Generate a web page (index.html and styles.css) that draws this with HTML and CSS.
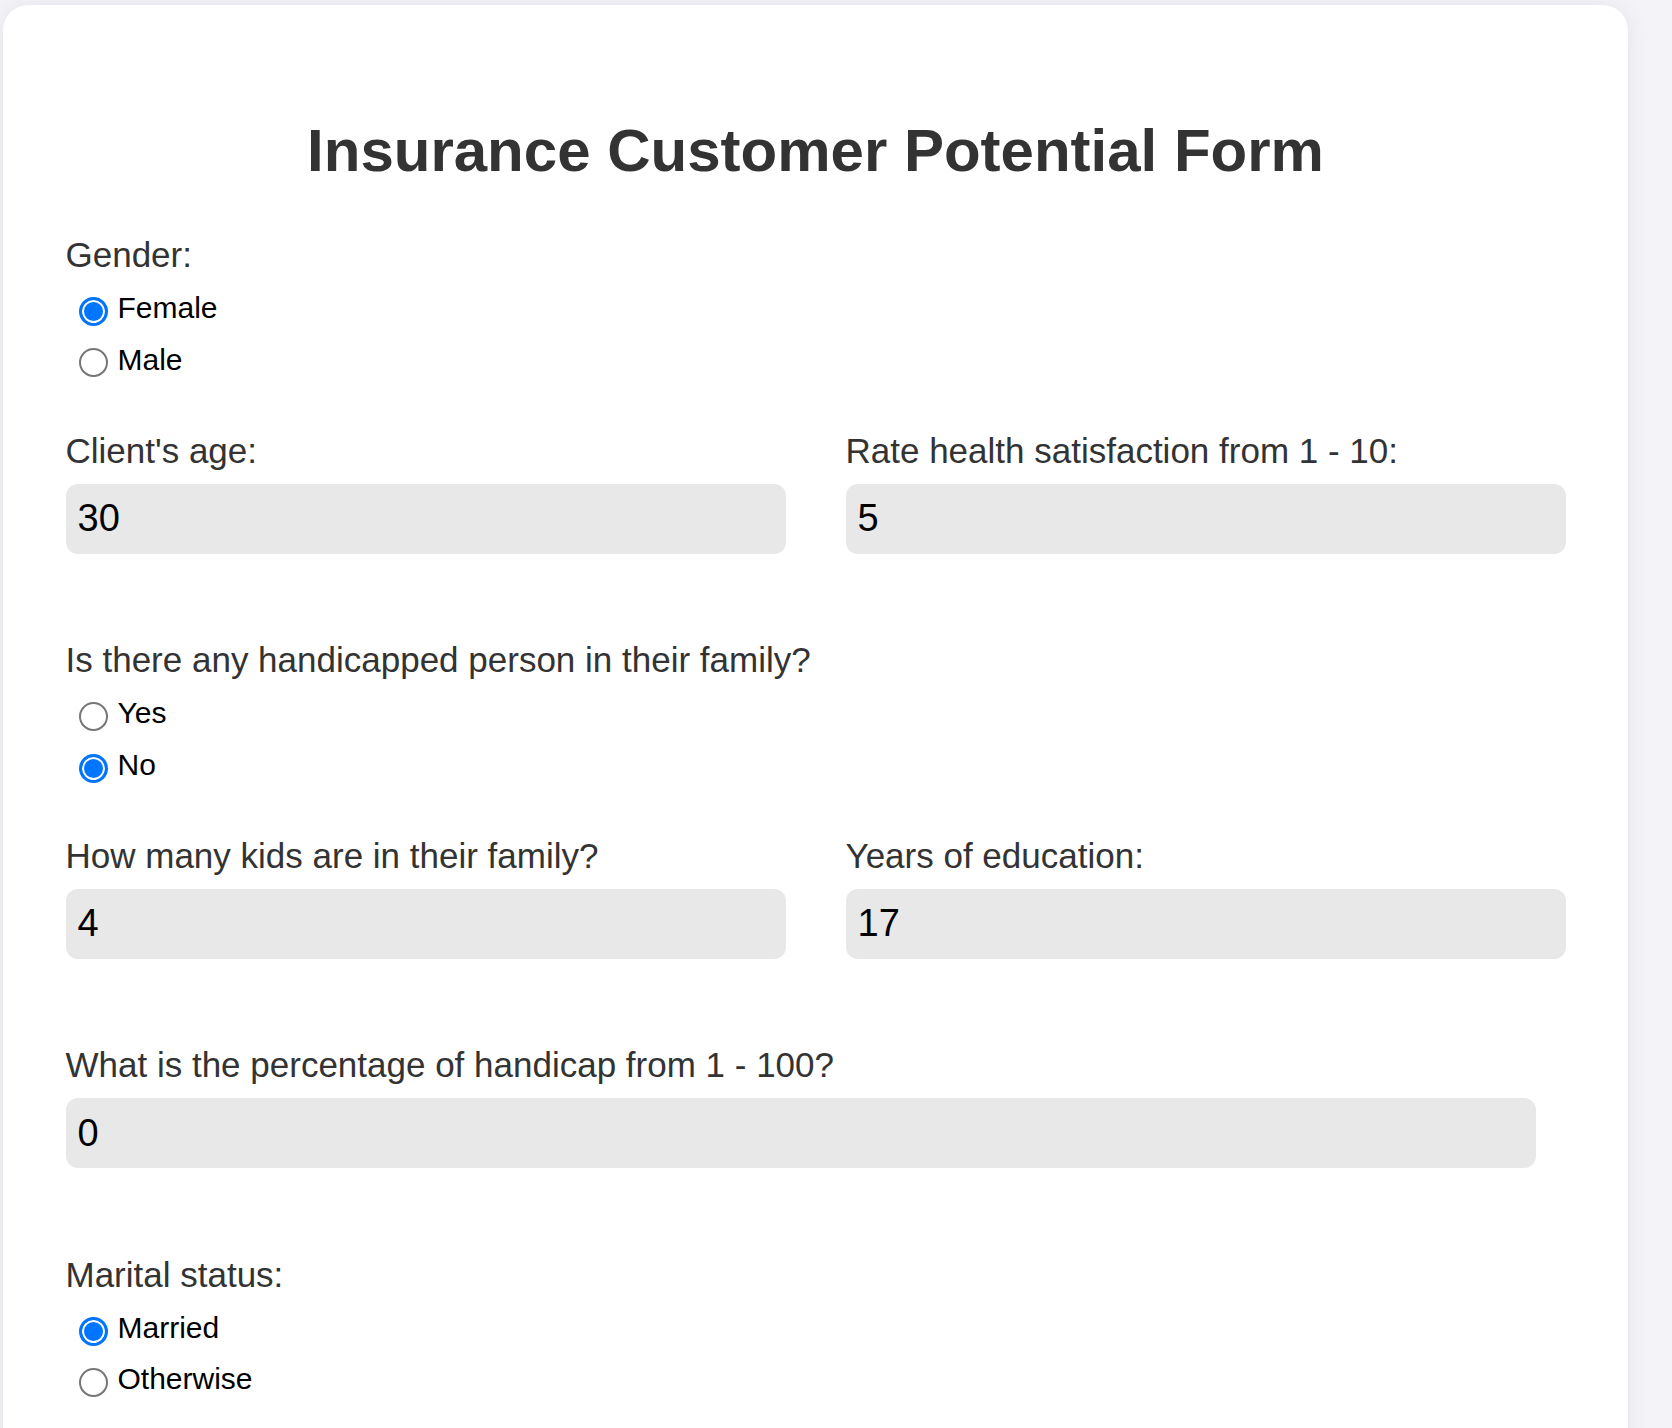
FILE: index.html
```html
<!DOCTYPE html>
<html lang="en">
<head>
<meta charset="utf-8">
<title>Insurance Customer Potential Form</title>
<link rel="stylesheet" href="styles.css">
</head>
<body>
<div class="card">
  <h1 class="title">Insurance Customer Potential Form</h1>
  <form class="form">
    <div class="radio-group">
      <div class="label label-radio">Gender:</div>
      <label class="option"><input class="radio" type="radio" name="gender" checked><span class="option-text">Female</span></label>
      <label class="option"><input class="radio" type="radio" name="gender"><span class="option-text">Male</span></label>
    </div>

    <div class="pair">
      <div class="field">
        <label class="label label-input">Client's age:</label>
        <input class="text-input" type="text" value="30">
      </div>
      <div class="field">
        <label class="label label-input">Rate health satisfaction from 1 - 10:</label>
        <input class="text-input" type="text" value="5">
      </div>
    </div>

    <div class="radio-group">
      <div class="label label-radio">Is there any handicapped person in their family?</div>
      <label class="option"><input class="radio" type="radio" name="handicap"><span class="option-text">Yes</span></label>
      <label class="option"><input class="radio" type="radio" name="handicap" checked><span class="option-text">No</span></label>
    </div>

    <div class="pair">
      <div class="field">
        <label class="label label-input">How many kids are in their family?</label>
        <input class="text-input" type="text" value="4">
      </div>
      <div class="field">
        <label class="label label-input">Years of education:</label>
        <input class="text-input" type="text" value="17">
      </div>
    </div>

    <div class="single">
      <label class="label label-input">What is the percentage of handicap from 1 - 100?</label>
      <input class="text-input text-input-wide" type="text" value="0">
    </div>

    <div class="radio-group">
      <div class="label label-radio">Marital status:</div>
      <label class="option"><input class="radio" type="radio" name="marital" checked><span class="option-text">Married</span></label>
      <label class="option"><input class="radio" type="radio" name="marital"><span class="option-text">Otherwise</span></label>
    </div>
  </form>
</div>
</body>
</html>
```

FILE: styles.css
```css
html, body {
  margin: 0;
  padding: 0;
}

body {
  background: #f4f4f8;
  font-family: "Liberation Sans", Arial, sans-serif;
  min-height: 1428px;
  overflow: hidden;
}

.card {
  box-sizing: border-box;
  width: 1625px;
  margin: 5px 0 0 3px;
  padding: 110px 62.5px 60px;
  background: #ffffff;
  border-radius: 25px;
  box-shadow: 0 0 22px rgba(40, 40, 80, 0.09);
  min-height: 1500px;
}

.title {
  margin: 0 0 50px;
  font-size: 60px;
  line-height: 72px;
  font-weight: bold;
  color: #333333;
  text-align: center;
}

.form {
  display: flex;
  flex-direction: column;
}

.label {
  display: block;
  font-size: 35px;
  line-height: 36px;
  color: #333333;
}

.label-radio {
  margin-bottom: 9px;
}

.label-input {
  margin-bottom: 15px;
}

.radio-group {
  display: flex;
  flex-direction: column;
  margin-bottom: 47.7px;
}

.option {
  display: flex;
  align-items: center;
  height: 51.5px;
}

.radio {
  appearance: none;
  -webkit-appearance: none;
  box-sizing: border-box;
  width: 29px;
  height: 29px;
  margin: 7.4px 10px 0 13px;
  border: 2px solid #767676;
  border-radius: 50%;
  background: #ffffff;
  flex: none;
}

.radio:checked {
  border: 3px solid #0075ff;
  background: #0075ff;
  box-shadow: inset 0 0 0 2px #ffffff;
}

.option-text {
  font-size: 30px;
  line-height: 51.5px;
  color: #000000;
}

.pair {
  display: grid;
  grid-template-columns: 1fr 1fr;
  column-gap: 60px;
  margin-bottom: 88.5px;
}

.field {
  display: flex;
  flex-direction: column;
}

.single {
  display: flex;
  flex-direction: column;
  margin-bottom: 88.3px;
}

.text-input {
  box-sizing: border-box;
  width: 100%;
  height: 70px;
  margin: 0;
  padding: 0 12px;
  border: none;
  border-radius: 12px;
  background: #e8e8e8;
  font-family: "Liberation Sans", Arial, sans-serif;
  font-size: 38px;
  color: #000000;
  outline: none;
}

.text-input-wide {
  width: 98%;
}
```
